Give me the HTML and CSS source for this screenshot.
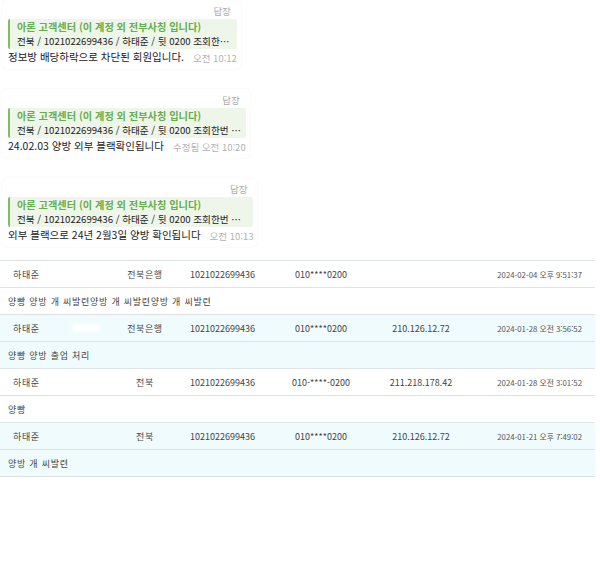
FILE: index.html
```html
<!DOCTYPE html>
<html lang="ko">
<head>
    <meta charset="UTF-8">
    <meta name="viewport" content="width=device-width, initial-scale=1.0">
    <title>회원 조회</title>
    <link rel="stylesheet" href="styles.css">
</head>
<body>
    <!-- 채팅 메시지 -->
    <div class="chat">
        <div class="bubble">
            <div class="reply">답장</div>
            <div class="quote">
                <div class="quote-title">아론 고객센터 (이 계정 외 전부사칭 입니다)</div>
                <div class="quote-text">전북 / 1021022699436 / 하태준 / 뒷 0200 조회한번 부탁드립니다</div>
            </div>
            <div class="msg">
                <span class="msg-text">정보방 배당하락으로 차단된 회원입니다.</span>
                <span class="time">오전 10:12</span>
            </div>
        </div>

        <div class="bubble">
            <div class="reply">답장</div>
            <div class="quote">
                <div class="quote-title">아론 고객센터 (이 계정 외 전부사칭 입니다)</div>
                <div class="quote-text">전북 / 1021022699436 / 하태준 / 뒷 0200 조회한번 부탁드립니다</div>
            </div>
            <div class="msg">
                <span class="msg-text">24.02.03 양방 외부 블랙확인됩니다</span>
                <span class="time">수정됨 오전 10:20</span>
            </div>
        </div>

        <div class="bubble">
            <div class="reply">답장</div>
            <div class="quote">
                <div class="quote-title">아론 고객센터 (이 계정 외 전부사칭 입니다)</div>
                <div class="quote-text">전북 / 1021022699436 / 하태준 / 뒷 0200 조회한번 부탁드립니다</div>
            </div>
            <div class="msg">
                <span class="msg-text">외부 블랙으로 24년 2월3일 양방 확인됩니다</span>
                <span class="time">오전 10:13</span>
            </div>
        </div>
    </div>

    <!-- 조회 결과 -->
    <div class="records">
        <div class="group">
            <div class="row data">
                <span class="name">하태준</span>
                <span></span>
                <span class="kr">전북은행</span>
                <span>1021022699436</span>
                <span>010****0200</span>
                <span></span>
                <span class="date">2024-02-04 오후 9:51:37</span>
            </div>
            <div class="row memo">양빵 양방 개 씨발련양방 개 씨발련양방 개 씨발련</div>
        </div>

        <div class="group alt">
            <div class="row data">
                <span class="name">하태준</span>
                <span><i class="masked"></i></span>
                <span class="kr">전북은행</span>
                <span>1021022699436</span>
                <span>010****0200</span>
                <span>210.126.12.72</span>
                <span class="date">2024-01-28 오전 3:56:52</span>
            </div>
            <div class="row memo">양빵 양방 출업 처리</div>
        </div>

        <div class="group">
            <div class="row data">
                <span class="name">하태준</span>
                <span></span>
                <span class="kr">전북</span>
                <span>1021022699436</span>
                <span>010-****-0200</span>
                <span>211.218.178.42</span>
                <span class="date">2024-01-28 오전 3:01:52</span>
            </div>
            <div class="row memo">양빵</div>
        </div>

        <div class="group alt">
            <div class="row data">
                <span class="name">하태준</span>
                <span></span>
                <span class="kr">전북</span>
                <span>1021022699436</span>
                <span>010****0200</span>
                <span>210.126.12.72</span>
                <span class="date">2024-01-21 오후 7:49:02</span>
            </div>
            <div class="row memo">양방 개 씨발련</div>
        </div>
    </div>
</body>
</html>
```

FILE: styles.css
```css
body {
    margin: 0;
    padding: 0;
    background: #fff;
    font-family: "Noto Sans CJK KR", "Noto Sans", sans-serif;
    color: #222;
}

/* Chat bubbles */
.chat {
    padding: 0 0 0 2px;
}

.bubble {
    width: fit-content;
    background: #fff;
    border-radius: 5px;
    box-shadow: 0 0 2px rgba(0, 0, 0, 0.07);
    padding: 4px 4px 4px 6px;
    margin-bottom: 20px;
}

.bubble:last-child {
    margin-bottom: 0;
}

.reply {
    text-align: right;
    font-size: 9.5px;
    line-height: 14px;
    color: #aaa;
    padding-right: 6px;
}

.quote {
    width: 0;
    min-width: 100%;
    box-sizing: border-box;
    margin-top: 1px;
    padding: 1px 4px 1px 7px;
    background: #eef6ea;
    border-left: 2px solid #7dc060;
    border-radius: 2px;
    line-height: 14px;
}

.quote-title,
.quote-text {
    white-space: nowrap;
    overflow: hidden;
    text-overflow: ellipsis;
}

.quote-title {
    color: #66ad4c;
    font-weight: bold;
    font-size: 10.2px;
}

.quote-text {
    color: #222;
    font-size: 9.6px;
}

.msg {
    display: flex;
    align-items: flex-end;
    height: 16px;
    white-space: nowrap;
}

.msg-text {
    font-size: 10.5px;
    line-height: 16px;
}

.time {
    margin-left: 9px;
    font-size: 9.5px;
    line-height: 14px;
    color: #b3b3b3;
}

/* Record list */
.records {
    width: 595px;
    margin-top: 13px;
    border-top: 1px solid #dde3e5;
    font-size: 9px;
    color: #444;
}

.group.alt {
    background: #effbfc;
}

.row {
    height: 26px;
    border-bottom: 1px solid #dde3e5;
    display: flex;
    align-items: center;
}

.row.data {
    display: grid;
    grid-template-columns: 60px 55px 60px 95px 102px 98px 1fr;
    align-items: center;
    text-align: center;
}

.row.data .name {
    text-align: left;
    padding-left: 13px;
    letter-spacing: 0.6px;
}

.row.data .kr {
    letter-spacing: 0.6px;
}

.row.data .date {
    text-align: right;
    padding-right: 13px;
    font-size: 7.8px;
    color: #555;
}

.row.memo {
    padding-left: 8px;
    letter-spacing: 0.75px;
}

.masked {
    display: block;
    width: 28px;
    height: 8px;
    margin-left: 12px;
    background: #fff;
    filter: blur(2px);
}
```
